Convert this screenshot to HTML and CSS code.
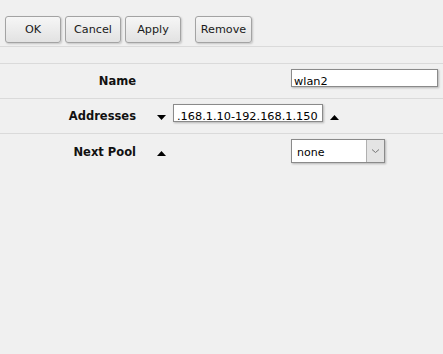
FILE: index.html
```html
<!DOCTYPE html>
<html>
<head>
<meta charset="utf-8">
<link rel="stylesheet" href="styles.css">
</head>
<body>
<div class="toolbar">
  <button class="btn">OK</button>
  <button class="btn">Cancel</button>
  <button class="btn">Apply</button>
  <button class="btn btn-sep">Remove</button>
</div>
<div class="form">
  <div class="row">
    <div class="label">Name</div>
    <div class="arrow-cell"></div>
    <div class="field field-name">wlan2</div>
  </div>
  <div class="row">
    <div class="label">Addresses</div>
    <div class="arrow-cell">
      <svg class="arrow" width="9" height="5" viewBox="0 0 9 5"><path d="M0 0H9L4.5 5Z" fill="#000"/></svg>
    </div>
    <div class="field field-addr">.168.1.10-192.168.1.150</div>
    <svg class="arrow arrow-after" width="9" height="5" viewBox="0 0 9 5"><path d="M0 5H9L4.5 0Z" fill="#000"/></svg>
  </div>
  <div class="row row-last">
    <div class="label">Next Pool</div>
    <div class="arrow-cell">
      <svg class="arrow" width="9" height="5" viewBox="0 0 9 5"><path d="M0 5H9L4.5 0Z" fill="#000"/></svg>
    </div>
    <div class="select">
      <span class="select-text">none</span>
      <span class="select-btn">
        <svg width="9" height="6" viewBox="0 0 9 6"><path d="M1 1.5L4.5 4.5L8 1.5" fill="none" stroke="#777" stroke-width="1"/></svg>
      </span>
    </div>
  </div>
</div>
</body>
</html>
```
FILE: styles.css
```css
html, body {
  margin: 0;
  padding: 0;
  background: #f0f0f0;
  width: 443px;
  height: 354px;
  overflow: hidden;
  font-family: "DejaVu Sans", Verdana, sans-serif;
  font-size: 11px;
  color: #000;
}

.toolbar {
  display: flex;
  gap: 4px;
  padding: 16px 0 0 5px;
  height: 47px;
  box-sizing: border-box;
  border-bottom: 1px solid #dadada;
}

.btn {
  width: 56px;
  height: 27px;
  padding: 0;
  font-family: "DejaVu Sans", Verdana, sans-serif;
  font-size: 11.2px;
  color: #1a1a1a;
  border: 1px solid #a3a3a3;
  border-radius: 3px;
  background: linear-gradient(#f6f6f6, #e2e2e2);
  box-shadow: 1px 1px 2px rgba(0, 0, 0, 0.18);
}

.btn-sep {
  margin-left: 10px;
  width: 57px;
}

.form {
  margin-top: 16px;
  border-top: 1px solid #dadada;
}

.row {
  display: flex;
  align-items: baseline;
  height: 35px;
  box-sizing: border-box;
  padding-top: 5px;
  border-bottom: 1px solid #dadada;
}

.row-last {
  border-bottom: none;
}

.label {
  width: 136px;
  text-align: right;
  font-weight: bold;
  font-size: 11.5px;
  color: #111;
}

.arrow-cell {
  width: 37px;
  flex: none;
}

.arrow {
  margin-left: 21px;
}

.arrow-after {
  margin-left: 7px;
}

.field {
  height: 18px;
  box-sizing: border-box;
  border: 1px solid #8a8a8a;
  background: #fff;
  box-shadow: 1px 1px 2px rgba(0, 0, 0, 0.25);
  padding: 6px 3px 0 2px;
  line-height: 11px;
  font-size: 11.3px;
  white-space: nowrap;
}

.field-name {
  margin-left: 118px;
  width: 147px;
}

.field-addr {
  width: 150px;
  padding-left: 3px;
}

.select {
  margin-left: 118px;
  width: 94px;
  height: 24px;
  box-sizing: border-box;
  border: 1px solid #8a8a8a;
  background: #fff;
  box-shadow: 1px 1px 2px rgba(0, 0, 0, 0.25);
  display: flex;
  align-items: baseline;
  padding-top: 7px;
  position: relative;
}

.select-text {
  padding-left: 5px;
  line-height: 12px;
  flex: 1;
}

.select-btn {
  position: absolute;
  right: 0;
  top: 0;
  bottom: 0;
  width: 17px;
  background: #e4e4e4;
  border-left: 1px solid #b0b0b0;
  display: flex;
  align-items: center;
  justify-content: center;
}
```
